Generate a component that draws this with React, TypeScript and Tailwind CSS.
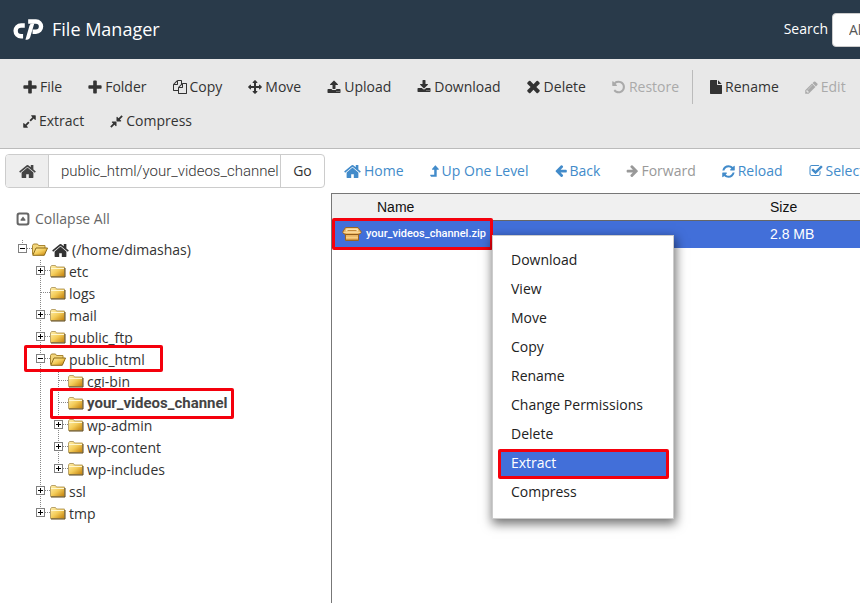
import React from "react";

const PATHS = {
  plus: "M1600 736v192q0 40-28 68t-68 28h-416v416q0 40-28 68t-68 28h-192q-40 0-68-28t-28-68v-416h-416q-40 0-68-28t-28-68v-192q0-40 28-68t68-28h416v-416q0-40 28-68t68-28h192q40 0 68 28t28 68v416h416q40 0 68 28t28 68z",
  home: "M1472 992v480q0 26-19 45t-45 19h-384v-384h-256v384h-384q-26 0-45-19t-19-45v-480q0-1 .5-3t.5-3l575-474 575 474q1 2 1 6zm223-69l-62 74q-8 9-21 11h-3q-13 0-21-7l-692-577-692 577q-12 8-24 7-13-2-21-11l-62-74q-8-10-7-23.5t11-21.5l719-599q32-26 76-26t76 26l244 204v-195q0-14 9-23t23-9h192q14 0 23 9t9 23v408l219 182q10 8 11 21.5t-7 23.5z",
  upload: "M1344 1472q0-26-19-45t-45-19-45 19-19 45 19 45 45 19 45-19 19-45zm256 0q0-26-19-45t-45-19-45 19-19 45 19 45 45 19 45-19 19-45zm128-224v320q0 40-28 68t-68 28h-1472q-40 0-68-28t-28-68v-320q0-40 28-68t68-28h427q21 56 70.5 92t110.5 36h256q61 0 110.5-36t70.5-92h427q40 0 68 28t28 68zm-325-648q-17 40-59 40h-256v448q0 26-19 45t-45 19h-256q-26 0-45-19t-19-45v-448h-256q-42 0-59-40-17-39 14-69l448-448q18-19 45-19t45 19l448 448q31 30 14 69z",
  download: "M1344 1344q0-26-19-45t-45-19-45 19-19 45 19 45 45 19 45-19 19-45zm256 0q0-26-19-45t-45-19-45 19-19 45 19 45 45 19 45-19 19-45zm128-224v320q0 40-28 68t-68 28h-1472q-40 0-68-28t-28-68v-320q0-40 28-68t68-28h465l135 136q58 56 136 56t136-56l136-136h464q40 0 68 28t28 68zm-325-569q17 41-14 70l-448 448q-18 19-45 19t-45-19l-448-448q-31-29-14-70 17-39 59-39h256v-448q0-26 19-45t45-19h256q26 0 45 19t19 45v448h256q42 0 59 39z",
  times: "M1490 1322q0 40-28 68l-136 136q-28 28-68 28t-68-28l-294-294-294 294q-28 28-68 28t-68-28l-136-136q-28-28-28-68t28-68l294-294-294-294q-28-28-28-68t28-68l136-136q28-28 68-28t68 28l294 294 294-294q28-28 68-28t68 28l136 136q28 28 28 68t-28 68l-294 294 294 294q28 28 28 68z",
  undo: "M1664 896q0 156-61 298t-164 245-245 164-298 61q-172 0-327-72.5t-264-204.5q-7-10-6.5-22.5t8.5-20.5l137-138q10-9 25-9 16 2 23 12 73 95 179 147t225 52q104 0 198.5-40.5t163.5-109.5 109.5-163.5 40.5-198.5-40.5-198.5-109.5-163.5-163.5-109.5-198.5-40.5q-98 0-188 35.5t-160 101.5l137 138q31 30 14 69-17 40-59 40h-448q-26 0-45-19t-19-45v-448q0-42 40-59 39-17 69 14l130 129q107-101 244.5-156.5t284.5-55.5q156 0 298 61t245 164 164 245 61 298z",
  back: "M1664 896v128q0 53-32.5 90.5t-84.5 37.5h-704l293 294q38 36 38 90t-38 90l-75 76q-37 37-90 37-52 0-91-37l-651-652q-37-37-37-90 0-52 37-91l651-650q38-38 91-38 52 0 90 38l75 74q38 38 38 91t-38 91l-293 293h704q52 0 84.5 37.5t32.5 90.5z",
  forward: "M1600 960q0 54-37 91l-651 651q-39 37-91 37-51 0-90-37l-75-75q-38-38-38-91t38-91l293-293h-704q-52 0-84.5-37.5t-32.5-90.5v-128q0-53 32.5-90.5t84.5-37.5h704l-293-294q-38-36-38-90t38-90l75-75q38-38 90-38 53 0 91 38l651 651q37 35 37 90z",
  refresh: "M1639 1056q0 5-1 7-64 268-268 434.5t-478 166.5q-146 0-282.5-55t-243.5-157l-129 129q-19 19-45 19t-45-19-19-45v-448q0-26 19-45t45-19h448q26 0 45 19t19 45-19 45l-137 137q71 66 161 102t187 36q134 0 250-65t186-179q11-17 53-117 8-23 30-23h192q13 0 22.5 9.5t9.5 22.5zm25-800v448q0 26-19 45t-45 19h-448q-26 0-45-19t-19-45 19-45l138-138q-148-137-349-137-134 0-250 65t-186 179q-11 17-53 117-8 23-30 23h-199q-13 0-22.5-9.5t-9.5-22.5v-7q65-268 270-434.5t480-166.5q146 0 284 55.5t245 156.5l130-129q19-19 45-19t45 19 19 45z",
  check: "M1472 930v318q0 119-84.5 203.5t-203.5 84.5h-832q-119 0-203.5-84.5t-84.5-203.5v-832q0-119 84.5-203.5t203.5-84.5h832q63 0 117 25 15 7 18 23 3 17-9 29l-49 49q-10 10-23 10-3 0-9-2-23-6-45-6h-832q-66 0-113 47t-47 113v832q0 66 47 113t113 47h832q66 0 113-47t47-113v-254q0-13 9-22l64-64q10-10 23-10 6 0 12 3 20 8 20 29zm231-489l-814 814q-24 24-57 24t-57-24l-430-430q-24-24-24-57t24-57l110-110q24-24 57-24t57 24l263 263 647-647q24-24 57-24t57 24l110 110q24 24 24 57t-24 57z",
  move: "M1792 896q0 26-19 45l-256 256q-19 19-45 19t-45-19-19-45v-128h-384v384h128q26 0 45 19t19 45-19 45l-256 256q-19 19-45 19t-45-19l-256-256q-19-19-19-45t19-45 45-19h128v-384h-384v128q0 26-19 45t-45 19-45-19l-256-256q-19-19-19-45t19-45l256-256q19-19 45-19t45 19 19 45v128h384v-384h-128q-26 0-45-19t-19-45 19-45l256-256q19-19 45-19t45 19l256 256q19 19 19 45t-19 45-45 19h-128v384h384v-128q0-26 19-45t45-19 45 19l256 256q19 19 19 45z",
  expand: "M883 1056q0 13-10 23l-332 332 144 144q19 19 19 45t-19 45-45 19h-448q-26 0-45-19t-19-45v-448q0-26 19-45t45-19 45 19l144 144 332-332q10-10 23-10t23 10l114 114q10 10 10 23zm781-864v448q0 26-19 45t-45 19-45-19l-144-144-332 332q-10 10-23 10t-23-10l-114-114q-10-10-10-23t10-23l332-332-144-144q-19-19-19-45t19-45 45-19h448q26 0 45 19t19 45z",
  compress: "M896 960v448q0 26-19 45t-45 19-45-19l-144-144-332 332q-10 10-23 10t-23-10l-114-114q-10-10-10-23t10-23l332-332-144-144q-19-19-19-45t19-45 45-19h448q26 0 45 19t19 45zm755-672q0 13-10 23l-332 332 144 144q19 19 19 45t-19 45-45 19h-448q-26 0-45-19t-19-45v-448q0-26 19-45t45-19 45 19l144 144 332-332q10-10 23-10t23 10l114 114q10 10 10 23z",
  pencil: "M491 1536l91-91-235-235-91 91v107h128v128h107zm523-928q0-22-22-22-10 0-17 7l-542 542q-7 7-7 17 0 22 22 22 10 0 17-7l542-542q7-7 7-17zm-54-192l416 416-832 832h-416v-416zm683 96q0 53-37 90l-166 166-416-416 166-165q36-38 90-38 53 0 91 38l235 234q37 39 37 91z",
  file: "M1152 512v-472q22 14 36 28l408 408q14 14 28 36h-472zm-128 32q0 40 28 68t68 28h544v1056q0 40-28 68t-68 28h-1344q-40 0-68-28t-28-68v-1600q0-40 28-68t68-28h800v544z",
  copy: "M1696 384q40 0 68 28t28 68v1216q0 40-28 68t-68 28h-960q-40 0-68-28t-28-68v-288h-544q-40 0-68-28t-28-68v-672q0-40 20-88t48-76l408-408q28-28 76-48t88-20h416q40 0 68 28t28 68v328q68-40 128-40h416zm-544 213l-299 299h299v-299zm-640-384l-299 299h299v-299zm196 647l316-316v-416h-384v416q0 40-28 68t-68 28h-416v640h512v-256q0-40 20-88t48-76zm956 804v-1152h-384v416q0 40-28 68t-68 28h-416v640h896z",
  levelUp: "M1010 150l420 480q20 70-50 80h-230v920h-730l-130-200q0-50 50-60h490v-660h-240q-60-10-50-80l400-480q30-30 70 0z",
  collapse: "M450 128h892a322 322 0 0 1 322 322v892a322 322 0 0 1-322 322h-892a322 322 0 0 1-322-322v-892a322 322 0 0 1 322-322zm60 240a142 142 0 0 0-142 142v772a142 142 0 0 0 142 142h772a142 142 0 0 0 142-142v-772a142 142 0 0 0-142-142zM896 600l300 400q20 100-60 110h-480q-80-10-60-110z",
};
type IconName = keyof typeof PATHS;

const ICON_BOX: Record<IconName, [string, string]> = {
  plus: ["150 86 1492 1492", "size-[14px]"],
  home: ["64 160 1664 1468", "h-[15px] w-[17px]"],
  upload: ["0 0 1792 1792", "size-[14px]"],
  download: ["0 0 1792 1792", "size-[14px]"],
  times: ["280 295 1330 1330", "size-[14px]"],
  undo: ["100 50 1692 1692", "size-[14px]"],
  back: ["110 150 1580 1580", "size-[12px]"],
  forward: ["40 150 1580 1580", "size-[12px]"],
  refresh: ["100 100 1592 1592", "size-[13px]"],
  check: ["0 0 1792 1792", "size-[14px]"],
  move: ["0 0 1792 1792", "size-[14px]"],
  expand: ["100 100 1592 1592", "size-[13px]"],
  compress: ["100 100 1592 1592", "size-[13px]"],
  pencil: ["100 100 1592 1592", "size-[13px]"],
  file: ["128 0 1536 1792", "h-[14px] w-[12px]"],
  copy: ["0 0 1792 1792", "size-[14px]"],
  levelUp: ["280 100 1170 1560", "h-[12px] w-[9px]"],
  collapse: ["60 60 1672 1672", "size-[14px]"],
};

function Icon({ name }: { name: IconName }) {
  const [viewBox, size] = ICON_BOX[name];
  return (
    <svg viewBox={viewBox} className={`${size} shrink-0`} fill="currentColor" fillRule={name === "collapse" ? "evenodd" : "nonzero"} aria-hidden="true">
      <path d={PATHS[name]} />
    </svg>
  );
}

function Logo() {
  return (
    <svg viewBox="0 0 90 62" className="h-[21px] w-[31px] shrink-0" fill="none" stroke="#fff" aria-label="cPanel">
      <path d="M34 19H23a16 16 0 0 0 0 32H29" strokeWidth="13" />
      <path d="M36 61L48 19Q50 13 56 13H62L50 54Q48 61 41 61z" fill="#fff" stroke="none" />
      <path d="M44 7.500H67a15 15 0 0 1 0 30H57" strokeWidth="13" />
    </svg>
  );
}

function Folder({ open }: { open?: boolean }) {
  return (
    <svg viewBox="0 0 16 13" className="h-[13px] w-4 shrink-0" aria-hidden="true">
      <defs>
        <linearGradient id="folderFill" x1="0" y1="0" x2="1" y2="1">
          <stop offset="0" stopColor="#fff0b0" />
          <stop offset="0.500" stopColor="#f4cc58" />
          <stop offset="1" stopColor="#c07c08" />
        </linearGradient>
      </defs>
      {open ? (
        <>
          <path d="M.5 11.500V2.500l1-1.500h4l1 1.500h6.500v2.500" fill="#f3d67c" stroke="#a98632" />
          <path d="M.8 12.300L4 5h11.500l-3.200 7.300z" fill="url(#folderFill)" stroke="#8d6a16" />
        </>
      ) : (
        <>
          <path d="M.5 11.500V2l1-1.500h4L6.500 2H14.500v9.500z" fill="url(#folderFill)" stroke="#b9a36a" />
          <path d="M1 3.500h13" stroke="#fff7cf" />
          <path d="M1 12h14V3" fill="none" stroke="#5d4514" />
        </>
      )}
    </svg>
  );
}

function Package() {
  return (
    <svg viewBox="0 0 20 16" className="h-4 w-5 shrink-0" aria-hidden="true">
      <path d="M3.500 1.500h12.500L19.300 6 18 8h-1.500v6.500H3.500V8H2L.700 6z" fill="#eab766" stroke="#9a6424" />
      <path d="M4.500 2.500h11l1 3h-13z" fill="#fbe3ae" />
      <path d="M5.500 4.500h9" stroke="#c48b3c" />
      <path d="M1.500 6.500h17" stroke="#fbd794" />
      <path d="M4 8.500h12" stroke="#8f5a1b" />
      <path d="M4 11.500h12" stroke="#f6cd84" strokeWidth="1.500" />
      <path d="M4 13.500h12" stroke="#cf9544" />
    </svg>
  );
}

function ToolButton({ icon, label, disabled }: { icon: IconName; label: string; disabled?: boolean }) {
  return (
    <button type="button" disabled={disabled} className="flex h-[34px] shrink-0 items-center gap-[3px] px-[13px] whitespace-nowrap text-[#333] disabled:text-[#aaa]">
      <Icon name={icon} />
      {label}
    </button>
  );
}

function NavButton({ icon, label, disabled }: { icon: IconName; label: string; disabled?: boolean }) {
  return (
    <button type="button" disabled={disabled} className="flex shrink-0 items-center gap-[3px] px-[13px] whitespace-nowrap text-[#428bca] disabled:text-[#999]">
      <Icon name={icon} />
      {label}
    </button>
  );
}

type Toggle = "open" | "closed" | "leaf";

function Branch({ toggle, root, last }: { toggle: Toggle; root?: boolean; last?: boolean }) {
  return (
    <svg viewBox="0 0 14 22" className="h-[22px] w-[14px] shrink-0" fill="none" shapeRendering="crispEdges" aria-hidden="true">
      <path d={root ? "M4.500 2V6" : last ? "M4.500 0V10" : "M4.500 0V22"} stroke="#888" strokeDasharray="1 1" />
      <path d="M5 10.500H14" stroke="#888" strokeDasharray="1 1" />
      {toggle !== "leaf" && (
        <>
          <rect x="0.500" y="6.500" width="8" height="8" fill="#fff" stroke="#808080" />
          <path d={toggle === "closed" ? "M2 10.500h5M4.500 8v5" : "M2 10.500h5"} stroke="#000" />
        </>
      )}
    </svg>
  );
}

function Guide() {
  return (
    <svg viewBox="0 0 18 22" className="h-[22px] w-[18px] shrink-0" fill="none" shapeRendering="crispEdges" aria-hidden="true">
      <path d="M4.500 0V22" stroke="#888" strokeDasharray="1 1" />
    </svg>
  );
}

type Node = { name: string; depth: 1 | 2; toggle: Toggle; last?: boolean; selected?: boolean; mark?: string };

const NODES: Node[] = [
  { name: "etc", depth: 1, toggle: "closed" },
  { name: "logs", depth: 1, toggle: "leaf" },
  { name: "mail", depth: 1, toggle: "closed" },
  { name: "public_ftp", depth: 1, toggle: "closed" },
  { name: "public_html", depth: 1, toggle: "open", mark: "-top-[3px] left-[24px] h-[27px] w-[139px]" },
  { name: "cgi-bin", depth: 2, toggle: "leaf" },
  { name: "your_videos_channel", depth: 2, toggle: "leaf", selected: true, mark: "-top-1 left-[50px] h-[31px] w-[184px]" },
  { name: "wp-admin", depth: 2, toggle: "closed" },
  { name: "wp-content", depth: 2, toggle: "closed" },
  { name: "wp-includes", depth: 2, toggle: "closed", last: true },
  { name: "ssl", depth: 1, toggle: "closed" },
  { name: "tmp", depth: 1, toggle: "closed", last: true },
];

function TreeRow({ node }: { node: Node }) {
  return (
    <li className="relative flex h-[22px] pl-9">
      {node.depth === 2 && <Guide />}
      <button type="button" className="flex items-center whitespace-nowrap">
        <Branch toggle={node.toggle} last={node.last} />
        <Folder open={node.toggle === "open"} />
        <span className={node.selected ? "pt-0.5 pl-[3px] font-[Roboto] text-[15px] font-bold text-[#444]" : "pt-0.5 pl-[3px]"}>{node.name}</span>
      </button>
      {node.mark && <span className={`pointer-events-none absolute z-10 rounded-[2px] border-3 border-[#f4000c] ${node.mark}`} />}
    </li>
  );
}

const MENU = ["Download", "View", "Move", "Copy", "Rename", "Change Permissions", "Delete", "Extract", "Compress"];

function ContextMenu() {
  return (
    <ul role="menu" className="absolute top-[41px] left-[160px] z-10 w-[182px] border border-[#ccc] bg-white pt-[9px] pb-[12px] text-[#222] shadow-[1px_4px_10px_1px_rgba(0,0,0,0.55)]">
      {MENU.map((item) => (
        <li key={item} role="none" className="relative px-[6px]">
          {item === "Extract" && (
            <span className="pointer-events-none absolute top-px right-[4px] -bottom-0.5 left-[5px] rounded-[2px] border-3 border-[#f4000c] bg-[#426fd9]" />
          )}
          <button
            type="button"
            role="menuitem"
            className={item === "Extract" ? "relative block h-[29px] w-full px-3 text-left text-white" : "block h-[29px] w-full px-3 text-left"}
          >
            {item}
          </button>
        </li>
      ))}
    </ul>
  );
}

export default function App() {
  return (
    <div className="flex min-h-screen flex-col overflow-hidden bg-white font-['Open_Sans',sans-serif] text-sm text-[#333]">
      <header className="flex h-[59px] shrink-0 items-center justify-between overflow-hidden bg-[#293a4a] text-white">
        <div className="flex items-center gap-2 pl-[13px]">
          <Logo />
          <h1 className="pb-0.5 text-lg">File Manager</h1>
        </div>
        <div className="-mr-16 flex items-center gap-1">
          <label htmlFor="scope" className="pb-0.5">Search</label>
          <select id="scope" className="h-[34px] w-[92px] appearance-none rounded border border-[#ccc] bg-white px-4 text-[#555]">
            <option>All Your Files</option>
          </select>
        </div>
      </header>

      <div role="toolbar" aria-label="File actions" className="shrink-0 overflow-hidden border-b border-[#bbb] bg-[#e8e8e8] pt-[11px] pb-[10px] pl-[10px]">
        <div className="flex">
          <ToolButton icon="plus" label="File" />
          <ToolButton icon="plus" label="Folder" />
          <ToolButton icon="copy" label="Copy" />
          <ToolButton icon="move" label="Move" />
          <ToolButton icon="upload" label="Upload" />
          <ToolButton icon="download" label="Download" />
          <ToolButton icon="times" label="Delete" />
          <ToolButton icon="undo" label="Restore" disabled />
          <span className="mr-1 h-[34px] w-px shrink-0 bg-[#bbb]" />
          <ToolButton icon="file" label="Rename" />
          <ToolButton icon="pencil" label="Edit" disabled />
        </div>
        <div className="flex">
          <ToolButton icon="expand" label="Extract" />
          <ToolButton icon="compress" label="Compress" />
        </div>
      </div>

      <div className="flex grow">
        <aside className="w-[331px] shrink-0">
          <form className="mt-[5px] ml-[5px] flex h-[34px] w-[320px] overflow-hidden rounded border border-[#ccc]">
            <button type="button" aria-label="Home" className="flex w-[43px] shrink-0 items-center justify-center border-r border-[#ccc] bg-[#eee] text-[#444]">
              <Icon name="home" />
            </button>
            <input aria-label="Path" defaultValue="public_html/your_videos_channel" className="min-w-0 grow pt-0.5 pl-3 font-[Roboto] text-[15px] font-light text-[#333] outline-none" />
            <button type="button" className="w-11 shrink-0 border-l border-[#ccc]">Go</button>
          </form>
          <button type="button" className="mt-[21px] ml-4 flex items-center gap-[5px] text-[#666]">
            <Icon name="collapse" />
            Collapse All
          </button>
          <div className="mt-[9px]">
            <button type="button" className="flex h-[22px] items-center pl-[18px]">
              <Branch toggle="open" root />
              <Folder open />
              <span className="flex items-center gap-[3px] pt-0.5 pl-1">
                <Icon name="home" />
                (/home/dimashas)
              </span>
            </button>
            <ul>
              {NODES.map((n) => (
                <TreeRow key={n.name} node={n} />
              ))}
            </ul>
          </div>
        </aside>

        <main className="flex min-w-0 grow flex-col">
          <nav aria-label="Navigation" className="flex h-11 shrink-0 overflow-hidden">
            <NavButton icon="home" label="Home" />
            <NavButton icon="levelUp" label="Up One Level" />
            <NavButton icon="back" label="Back" />
            <NavButton icon="forward" label="Forward" disabled />
            <NavButton icon="refresh" label="Reload" />
            <NavButton icon="check" label="Select All" />
          </nav>
          <div className="relative grow border-t border-l border-[#777] font-['Liberation_Sans',sans-serif]">
            <table className="w-full table-fixed border-collapse text-left">
              <thead>
                <tr className="h-[26px] bg-[#f0f0f0] text-[#111]">
                  <th className="pl-[45px] font-normal">Name</th>
                  <th className="w-[90px] font-normal">Size</th>
                </tr>
              </thead>
              <tbody>
                <tr className="h-7 border-t border-[#666] bg-[#426fd9] text-white">
                  <td className="relative pl-[10px]">
                    <span className="flex items-center gap-1 font-[Roboto] text-[11px] font-medium">
                      <Package />
                      your_videos_channel.zip
                    </span>
                    <span className="pointer-events-none absolute -top-[3px] left-0 h-8 w-[161px] rounded-[2px] border-3 border-[#f4000c]" />
                  </td>
                  <td className="w-[90px]">2.8 MB</td>
                </tr>
              </tbody>
            </table>
            <div className="font-['Open_Sans',sans-serif]">
              <ContextMenu />
            </div>
          </div>
        </main>
      </div>
    </div>
  );
}
